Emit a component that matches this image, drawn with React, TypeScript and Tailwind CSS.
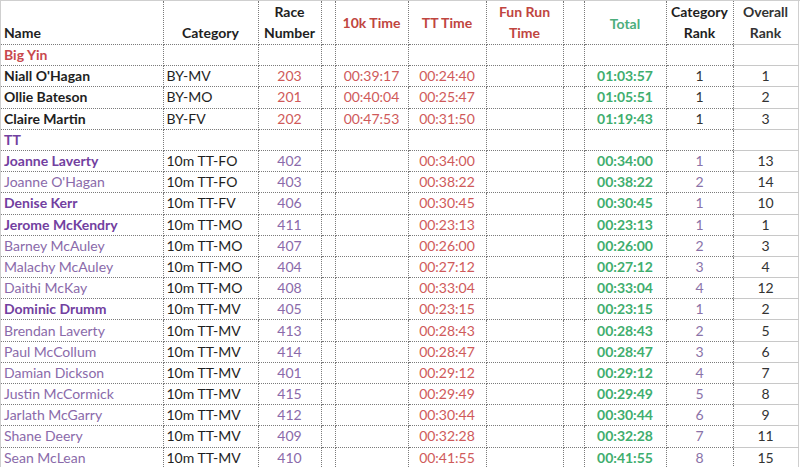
import React from 'react';

type Row = {
  name: string;
  bold?: boolean;
  cat: string;
  num: string;
  tenk?: string;
  tt: string;
  total: string;
  catRank: string;
  overall: string;
};

const bigYin: Row[] = [
  { name: "Niall O'Hagan", bold: true, cat: 'BY-MV', num: '203', tenk: '00:39:17', tt: '00:24:40', total: '01:03:57', catRank: '1', overall: '1' },
  { name: 'Ollie Bateson', bold: true, cat: 'BY-MO', num: '201', tenk: '00:40:04', tt: '00:25:47', total: '01:05:51', catRank: '1', overall: '2' },
  { name: 'Claire Martin', bold: true, cat: 'BY-FV', num: '202', tenk: '00:47:53', tt: '00:31:50', total: '01:19:43', catRank: '1', overall: '3' },
];

const tt: Row[] = [
  { name: 'Joanne Laverty', bold: true, cat: '10m TT-FO', num: '402', tt: '00:34:00', total: '00:34:00', catRank: '1', overall: '13' },
  { name: "Joanne O'Hagan", cat: '10m TT-FO', num: '403', tt: '00:38:22', total: '00:38:22', catRank: '2', overall: '14' },
  { name: 'Denise Kerr', bold: true, cat: '10m TT-FV', num: '406', tt: '00:30:45', total: '00:30:45', catRank: '1', overall: '10' },
  { name: 'Jerome McKendry', bold: true, cat: '10m TT-MO', num: '411', tt: '00:23:13', total: '00:23:13', catRank: '1', overall: '1' },
  { name: 'Barney McAuley', cat: '10m TT-MO', num: '407', tt: '00:26:00', total: '00:26:00', catRank: '2', overall: '3' },
  { name: 'Malachy McAuley', cat: '10m TT-MO', num: '404', tt: '00:27:12', total: '00:27:12', catRank: '3', overall: '4' },
  { name: 'Daithi McKay', cat: '10m TT-MO', num: '408', tt: '00:33:04', total: '00:33:04', catRank: '4', overall: '12' },
  { name: 'Dominic Drumm', bold: true, cat: '10m TT-MV', num: '405', tt: '00:23:15', total: '00:23:15', catRank: '1', overall: '2' },
  { name: 'Brendan Laverty', cat: '10m TT-MV', num: '413', tt: '00:28:43', total: '00:28:43', catRank: '2', overall: '5' },
  { name: 'Paul McCollum', cat: '10m TT-MV', num: '414', tt: '00:28:47', total: '00:28:47', catRank: '3', overall: '6' },
  { name: 'Damian Dickson', cat: '10m TT-MV', num: '401', tt: '00:29:12', total: '00:29:12', catRank: '4', overall: '7' },
  { name: 'Justin McCormick', cat: '10m TT-MV', num: '415', tt: '00:29:49', total: '00:29:49', catRank: '5', overall: '8' },
  { name: 'Jarlath McGarry', cat: '10m TT-MV', num: '412', tt: '00:30:44', total: '00:30:44', catRank: '6', overall: '9' },
  { name: 'Shane Deery', cat: '10m TT-MV', num: '409', tt: '00:32:28', total: '00:32:28', catRank: '7', overall: '11' },
  { name: 'Sean McLean', cat: '10m TT-MV', num: '410', tt: '00:41:55', total: '00:41:55', catRank: '8', overall: '15' },
];

const cell = 'border-b border-r border-dotted border-[#7a7a7a] p-0 overflow-hidden whitespace-nowrap';
const last = 'border-b border-solid border-[#c8c8c8] p-0 text-center text-[#333]';

const DataRow: React.FC<{ row: Row; group: 'by' | 'tt' }> = ({ row, group }) => {
  const nameColor = group === 'by' ? 'text-[#1e1e1e]' : row.bold ? 'text-[#7240a0]' : 'text-[#8a6aaa]';
  const numColor = group === 'by' ? 'text-[#cf5a5a]' : 'text-[#8a6aaa]';
  const rankColor = group === 'by' ? 'text-[#333]' : 'text-[#8a72a8]';
  return (
    <tr className="h-[21.2px]">
      <td className={`${cell} pl-[3px] ${nameColor} ${row.bold ? 'font-bold' : ''}`}>{row.name}</td>
      <td className={`${cell} pl-[3px] text-[#1e1e1e]`}>{row.cat}</td>
      <td className={`${cell} text-center ${numColor}`}>{row.num}</td>
      <td className={cell}></td>
      <td className={`${cell} text-center text-[#cf5a5a]`}>{row.tenk ?? ''}</td>
      <td className={`${cell} text-center text-[#cf5a5a]`}>{row.tt}</td>
      <td className={cell}></td>
      <td className={cell}></td>
      <td className={`${cell} text-center font-bold text-[#3fae6e]`}>{row.total}</td>
      <td className={`${cell} text-center ${rankColor}`}>{row.catRank}</td>
      <td className={last}>{row.overall}</td>
    </tr>
  );
};

const GroupRow: React.FC<{ label: string; color: string }> = ({ label, color }) => (
  <tr className="h-[21.2px]">
    <td className={`${cell} pl-[3px] font-bold ${color}`}>{label}</td>
    <td className={cell}></td>
    <td className={cell}></td>
    <td className={cell}></td>
    <td className={cell}></td>
    <td className={cell}></td>
    <td className={cell}></td>
    <td className={cell}></td>
    <td className={cell}></td>
    <td className={cell}></td>
    <td className={last}></td>
  </tr>
);

const App: React.FC = () => {
  return (
    <div className="w-[800px] h-[467px] overflow-hidden bg-white border-t border-l border-[#cfcfcf] font-['Lato','Open_Sans',sans-serif] text-[14px] leading-[20px]">
      <table className="table-fixed border-collapse w-[797px] border-r border-[#cfcfcf]">
        <colgroup>
          <col className="w-[162px]" />
          <col className="w-[95px]" />
          <col className="w-[63px]" />
          <col className="w-[14px]" />
          <col className="w-[73px]" />
          <col className="w-[78px]" />
          <col className="w-[77px]" />
          <col className="w-[21px]" />
          <col className="w-[82px]" />
          <col className="w-[67px]" />
          <col className="w-[65px]" />
        </colgroup>
        <thead>
          <tr className="h-[42px] font-bold">
            <th className={`${cell} align-bottom text-left pl-[3px] pb-[1px] text-[#1e1e1e]`}>Name</th>
            <th className={`${cell} align-bottom text-center pb-[1px] text-[#1e1e1e]`}>Category</th>
            <th className={`${cell} align-bottom text-center pb-[1px] leading-[21px] text-[#1e1e1e] whitespace-normal`}>Race<br />Number</th>
            <th className={cell}></th>
            <th className={`${cell} align-middle text-center text-[#c0453f]`}>10k Time</th>
            <th className={`${cell} align-middle text-center text-[#c0453f]`}>TT Time</th>
            <th className={`${cell} align-bottom text-center pb-[1px] leading-[21px] text-[#c0453f] whitespace-normal`}>Fun Run<br />Time</th>
            <th className={cell}></th>
            <th className={`${cell} align-middle text-center pt-[3px] text-[#4cae7c]`}>Total</th>
            <th className={`${cell} align-bottom text-center pb-[1px] leading-[21px] text-[#1e1e1e] whitespace-normal`}>Category<br />Rank</th>
            <th className={`${last} align-bottom pb-[1px] leading-[21px] font-bold text-[#1e1e1e]`}>Overall<br />Rank</th>
          </tr>
        </thead>
        <tbody>
          <GroupRow label="Big Yin" color="text-[#c8484c]" />
          {bigYin.map((r) => (
            <DataRow key={r.num} row={r} group="by" />
          ))}
          <GroupRow label="TT" color="text-[#7240a0]" />
          {tt.map((r) => (
            <DataRow key={r.num} row={r} group="tt" />
          ))}
        </tbody>
      </table>
    </div>
  );
};

export default App;
